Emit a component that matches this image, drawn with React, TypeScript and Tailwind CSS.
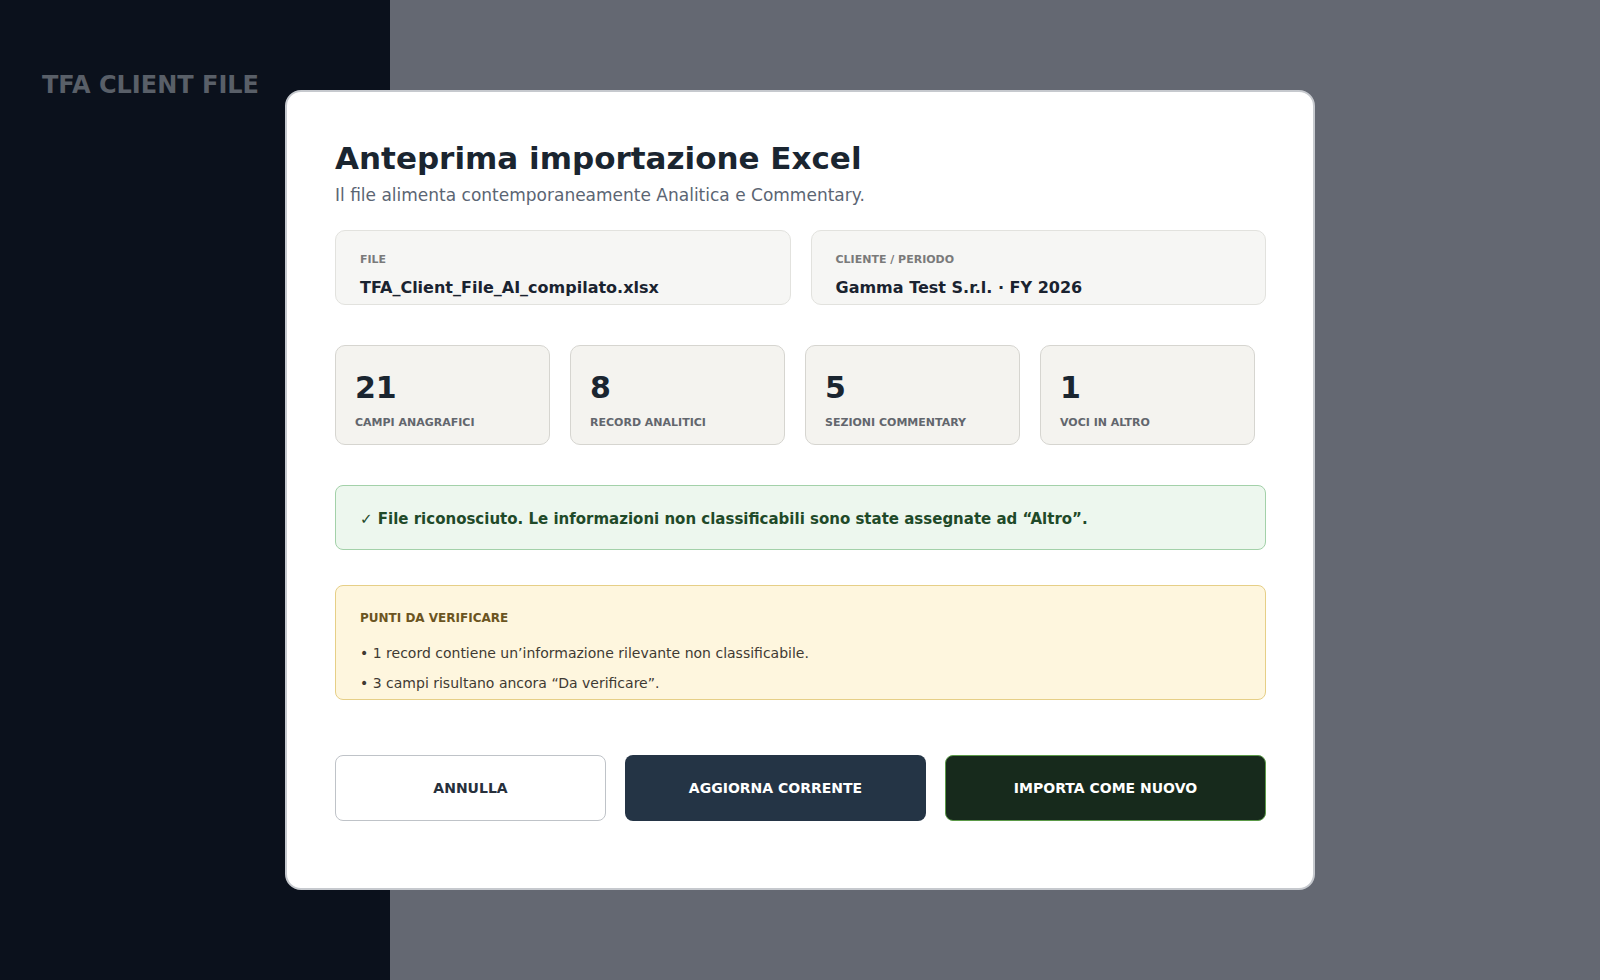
import React from "react"

const infoCards = [
  { label: "FILE", value: "TFA_Client_File_AI_compilato.xlsx" },
  { label: "CLIENTE / PERIODO", value: "Gamma Test S.r.l. · FY 2026" },
]

const stats = [
  { value: "21", label: "CAMPI ANAGRAFICI" },
  { value: "8", label: "RECORD ANALITICI" },
  { value: "5", label: "SEZIONI COMMENTARY" },
  { value: "1", label: "VOCI IN ALTRO" },
]

const checks = [
  "1 record contiene un’informazione rilevante non classificabile.",
  "3 campi risultano ancora “Da verificare”.",
]

export default function App() {
  return (
    <div className="relative flex h-[980px] w-[1600px] overflow-hidden font-['DejaVu_Sans',sans-serif]">
      {/* Sidebar */}
      <aside className="w-[390px] shrink-0 bg-[#0b111c] pl-[42px] pt-[69px]">
        <div className="text-[24px] font-bold leading-8 text-[#595f68]">TFA CLIENT FILE</div>
      </aside>

      {/* Main area (dimmed) */}
      <main className="flex-1 bg-[#646872]" />

      {/* Modal */}
      <div className="absolute inset-0 flex items-center justify-center">
        <div className="h-[800px] w-[1030px] rounded-[16px] border-2 border-[#c6c9ce] bg-white pl-[48px] pr-[47px] pt-[48px]">
          <h1 className="text-[31px] font-bold leading-[37px] text-[#1a2530]">Anteprima importazione Excel</h1>
          <p className="mt-[6px] text-[17px] leading-6 text-[#5b6573]">
            Il file alimenta contemporaneamente Analitica e Commentary.
          </p>

          <div className="mt-[23px] grid grid-cols-2 gap-5">
            {infoCards.map((c) => (
              <div
                key={c.label}
                className="h-[75px] rounded-[10px] border border-[#e2e2de] bg-[#f6f6f4] px-6 pt-[21px]"
              >
                <div className="text-[11px] font-bold leading-4 text-[#7a7a7a]">{c.label}</div>
                <div className="mt-[10px] text-[16px] font-bold leading-5 text-[#1a2330]">{c.value}</div>
              </div>
            ))}
          </div>

          <div className="mt-10 flex gap-5">
            {stats.map((s) => (
              <div
                key={s.label}
                className="h-[100px] w-[215px] rounded-[10px] border border-[#d6d5d0] bg-[#f4f3ef] px-[19px] pt-6"
              >
                <div className="text-[30px] font-bold leading-9 text-[#1a2530]">{s.value}</div>
                <div className="mt-[9px] text-[11px] font-bold leading-4 text-[#62666d]">{s.label}</div>
              </div>
            ))}
          </div>

          <div className="mt-10 flex h-[65px] items-center rounded-[8px] border border-[#a3d1a9] bg-[#edf7ee] px-6 pt-[3px] text-[15px] font-bold text-[#1f4a29]">
            ✓ File riconosciuto. Le informazioni non classificabili sono state assegnate ad “Altro”.
          </div>

          <div className="mt-[35px] h-[115px] rounded-[8px] border border-[#e6cf87] bg-[#fef6de] px-6 pt-[24px]">
            <div className="text-[12px] font-bold leading-4 text-[#6b5421]">PUNTI DA VERIFICARE</div>
            <ul className="mt-[17px] flex flex-col gap-[10px] text-[14px] leading-5 text-[#3e3a33]">
              {checks.map((t) => (
                <li key={t}>• {t}</li>
              ))}
            </ul>
          </div>

          <div className="mt-[55px] flex gap-[19px] text-[14px] font-bold">
            <button className="h-[66px] w-[271px] rounded-[8px] border border-[#bfc3c8] bg-white text-[#27303c]">
              ANNULLA
            </button>
            <button className="h-[66px] w-[301px] rounded-[8px] bg-[#243445] text-white">AGGIORNA CORRENTE</button>
            <button className="h-[66px] flex-1 rounded-[8px] border border-[#5b9a48] bg-[#172a1c] text-white">
              IMPORTA COME NUOVO
            </button>
          </div>
        </div>
      </div>
    </div>
  )
}
